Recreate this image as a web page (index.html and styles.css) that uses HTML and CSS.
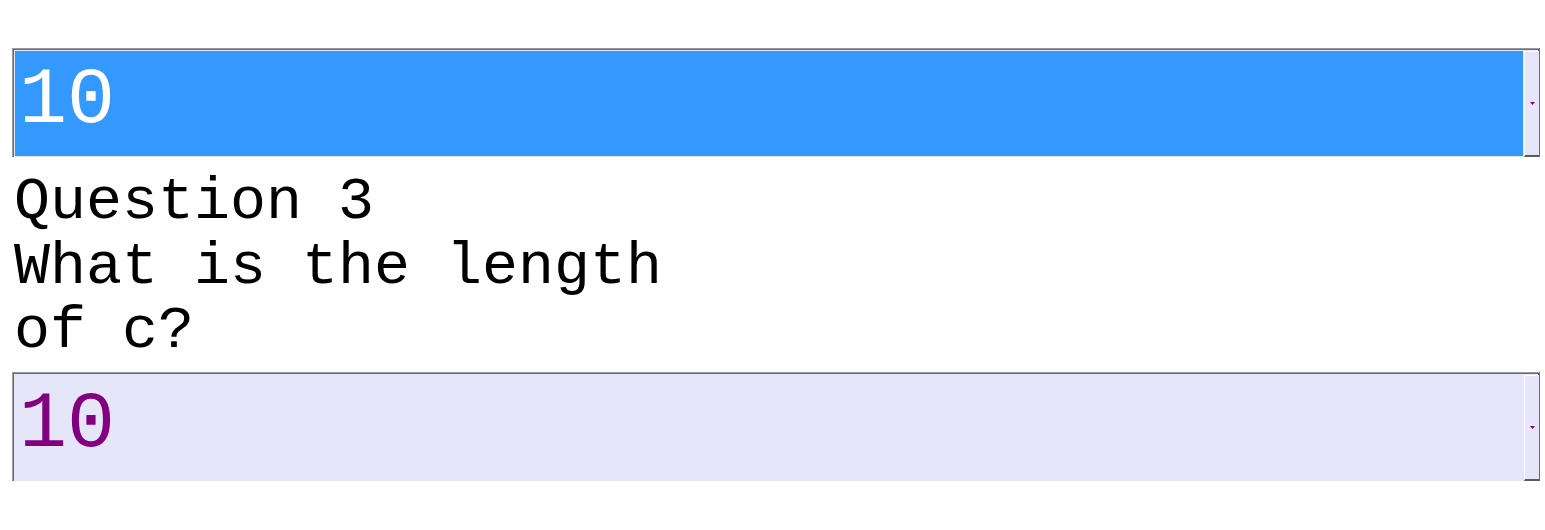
FILE: index.html
```html
<!DOCTYPE html>
<html>
<head>
<meta charset="utf-8">
<link rel="stylesheet" href="styles.css">
</head>
<body>
<div class="page">
  <div class="select is-selected">
    <div class="value">10</div>
    <div class="btn"><svg width="5" height="3" viewBox="0 0 5 3"><polygon points="0,0 5,0 2.5,3" fill="#800080"/></svg></div>
  </div>
  <div class="question">Question 3<br>What is the length<br>of c?</div>
  <div class="select">
    <div class="value">10</div>
    <div class="btn"><svg width="5" height="3" viewBox="0 0 5 3"><polygon points="0,0 5,0 2.5,3" fill="#800080"/></svg></div>
  </div>
</div>
</body>
</html>
```

FILE: styles.css
```css
html, body {
  margin: 0;
  padding: 0;
  background: #ffffff;
}

body {
  font-family: "Liberation Mono", "Courier New", monospace;
}

.page {
  display: flex;
  flex-direction: column;
  align-items: flex-start;
  padding: 48px 0 0 12px;
}

.select {
  width: 1528px;
  height: 109px;
  box-sizing: border-box;
  display: flex;
  border-top: 1px solid #9a9a9a;
  border-left: 1px solid #9a9a9a;
  border-right: 1px solid #6a6a6a;
  box-shadow: inset 1px 1px 0 #6c6c6c, inset -1px 0 0 #555555;
  padding: 2px 2px 0 2px;
  background: #e6e6fa;
}

.value {
  flex: 1;
  font-size: 80px;
  line-height: 90px;
  padding: 5px 0 0 4px;
  color: #800080;
  background: #e6e6fa;
  border-bottom: 1px solid #e6e6fa;
  box-sizing: border-box;
}

.is-selected .value {
  background: #3399ff;
  color: #ffffff;
}

.btn {
  width: 15px;
  box-sizing: border-box;
  margin-left: 1px;
  background: #e6e6fa;
  border-left: 1px solid #ffffff;
  border-top: 1px solid #ffffff;
  border-bottom: 2px solid #5a5a5a;
  margin-right: -2px;
  display: flex;
  align-items: center;
  justify-content: center;
}

.btn svg {
  display: block;
}

.question {
  font-size: 60px;
  line-height: 64.5px;
  color: #000000;
  padding-left: 2px;
  margin: 13px 0 8px 0;
}
```
